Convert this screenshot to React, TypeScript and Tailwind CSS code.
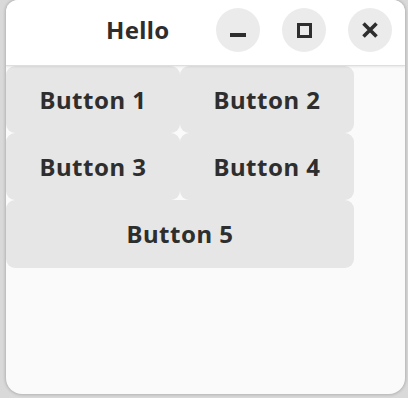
import React from "react";

export default function App() {
  const font = { fontFamily: '"Noto Sans", "Open Sans", sans-serif' };
  return (
    <div
      className="w-[408px] h-[398px] bg-[#d9d9d9] pl-[6px] pr-[3px] pb-[4px] overflow-hidden"
      style={font}
    >
      <div className="w-[399px] h-[394px] flex flex-col bg-[#fafafa] rounded-t-[12px] rounded-b-[16px] overflow-hidden shadow-[0_0_3px_1px_rgba(0,0,0,0.18)]">
        <div className="h-[66px] shrink-0 bg-white flex items-start border-b border-[#dedede] shadow-[0_1px_2px_rgba(0,0,0,0.08)] relative z-10">
          <div className="ml-[100px] mt-[14px] text-[24px] font-bold text-[#2e2e2e] leading-[32px] tracking-[0.3px]">
            Hello
          </div>
          <div className="ml-auto mr-[13px] mt-[8px] flex gap-[22px]">
            <div className="w-[44px] h-[44px] rounded-full bg-[#ebebeb] flex items-center justify-center">
              <div className="w-[16px] h-[4px] bg-[#2e2e2e] mt-[10px]" />
            </div>
            <div className="w-[44px] h-[44px] rounded-full bg-[#ebebeb] flex items-center justify-center">
              <div className="w-[15px] h-[15px] border-[3.5px] border-[#2e2e2e]" />
            </div>
            <div className="w-[44px] h-[44px] rounded-full bg-[#ebebeb] flex items-center justify-center">
              <svg width="18" height="18" viewBox="0 0 18 18">
                <path d="M2.5 2.5 L15.5 15.5 M15.5 2.5 L2.5 15.5" stroke="#2e2e2e" strokeWidth="3.6" strokeLinecap="butt" />
              </svg>
            </div>
          </div>
        </div>
        <div className="grid grid-cols-2 w-[348px]">
          {["Button 1", "Button 2", "Button 3", "Button 4"].map((t) => (
            <div
              key={t}
              className="h-[67px] rounded-[9px] bg-[#e6e6e6] flex items-center justify-center text-[24px] font-bold text-[#2e2e2e] tracking-[0.5px]"
            >
              {t}
            </div>
          ))}
          <div className="col-span-2 h-[68px] rounded-[9px] bg-[#e6e6e6] flex items-center justify-center text-[24px] font-bold text-[#2e2e2e] tracking-[0.5px]">
            Button 5
          </div>
        </div>
      </div>
    </div>
  );
}
